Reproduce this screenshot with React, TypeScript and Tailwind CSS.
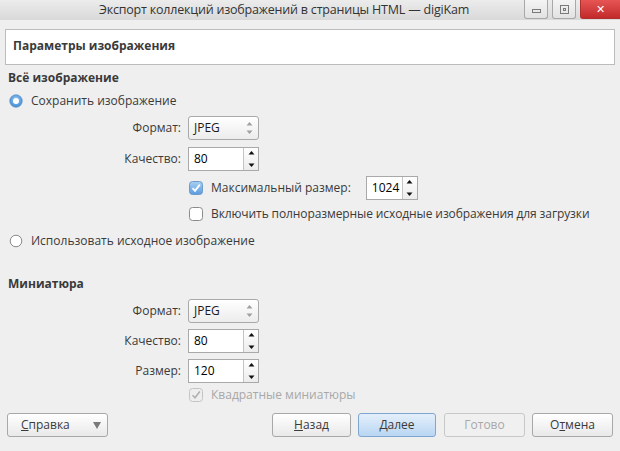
import React from 'react';

const font = { fontFamily: '"Open Sans", "Noto Sans", "DejaVu Sans", sans-serif' };

function Radio({ checked }: { checked?: boolean }) {
  return (
    <svg width="14" height="14" viewBox="0 0 14 14" className="shrink-0">
      <defs>
        <radialGradient id="rg" cx="50%" cy="40%" r="60%">
          <stop offset="0%" stopColor="#9fcdf4" />
          <stop offset="100%" stopColor="#3d8ad6" />
        </radialGradient>
      </defs>
      {checked ? (
        <>
          <circle cx="7" cy="7" r="6.2" fill="url(#rg)" stroke="#5b8fc4" strokeWidth="0.8" />
          <circle cx="7" cy="7" r="3" fill="#ffffff" />
        </>
      ) : (
        <circle cx="7" cy="7" r="5.8" fill="#ffffff" stroke="#8a8a8a" strokeWidth="1" />
      )}
    </svg>
  );
}

function Check({ checked, disabled }: { checked?: boolean; disabled?: boolean }) {
  if (disabled) {
    return (
      <svg width="14" height="14" viewBox="0 0 14 14" className="shrink-0">
        <rect x="0.5" y="0.5" width="13" height="13" rx="3" fill="#eeeeee" stroke="#c4c4c4" />
        <path d="M3.5 7.2 L6 9.8 L10.8 3.6" fill="none" stroke="#b0b0b0" strokeWidth="1.6" />
      </svg>
    );
  }
  return (
    <svg width="14" height="14" viewBox="0 0 14 14" className="shrink-0">
      <defs>
        <linearGradient id="cg" x1="0" y1="0" x2="0" y2="1">
          <stop offset="0%" stopColor="#a8d0f2" />
          <stop offset="100%" stopColor="#5b9be0" />
        </linearGradient>
      </defs>
      {checked ? (
        <>
          <rect x="0.5" y="0.5" width="13" height="13" rx="3" fill="url(#cg)" stroke="#6f9bc8" />
          <path d="M3.5 7.2 L6 9.8 L10.8 3.6" fill="none" stroke="#ffffff" strokeWidth="1.8" />
        </>
      ) : (
        <rect x="0.5" y="0.5" width="13" height="13" rx="3" fill="#ffffff" stroke="#8a8a8a" />
      )}
    </svg>
  );
}

// up/down arrow pair used by combo boxes and spin boxes
function Arrows({ color, gap }: { color: string; gap: number }) {
  const h = 8 + gap;
  return (
    <svg width="7" height={h} viewBox={`0 0 7 ${h}`}>
      <path d="M0.5 3.5 L3.5 0 L6.5 3.5 Z" fill={color} />
      <path d={`M0.5 ${h - 3.5} L3.5 ${h} L6.5 ${h - 3.5} Z`} fill={color} />
    </svg>
  );
}

function Combo({ value }: { value: string }) {
  return (
    <div className="flex h-[24px] w-[71px] items-center justify-between rounded-[3px] border border-[#a9a9a9] bg-gradient-to-b from-[#ffffff] to-[#ececec] pl-[5px] pr-[5px] text-[12px] text-[#1a1a1a]">
      <span>{value}</span>
      <Arrows color="#a0a0a0" gap={4} />
    </div>
  );
}

function Spin({ value, width = 71 }: { value: string; width?: number }) {
  return (
    <div
      className="flex h-[24px] items-stretch border border-[#a9a9a9] bg-white text-[12px] text-black"
      style={{ width }}
    >
      <span className="flex flex-1 items-center pl-[5px]">{value}</span>
      <span className="flex w-[15px] items-center justify-center border-l border-[#c4c4c4] bg-gradient-to-b from-[#ffffff] to-[#ececec]">
        <Arrows color="#111111" gap={8} />
      </span>
    </div>
  );
}

function Row({ label, children }: { label: string; children: React.ReactNode }) {
  return (
    <div className="flex items-center">
      <div className="w-[182px] pr-[1px] text-right">{label}</div>
      <div className="pl-[6px]">{children}</div>
    </div>
  );
}

function Button({
  children,
  className,
}: {
  children: React.ReactNode;
  className: string;
}) {
  return (
    <div className={'flex h-[24px] items-center rounded-[3px] border text-[12px] ' + className}>
      {children}
    </div>
  );
}

export default function App() {
  return (
    <div className="h-[451px] w-[620px] overflow-hidden bg-[#efefef] text-[12px] text-[#3a3a3a]" style={font}>
      {/* Title bar */}
      <div className="flex h-[20px] items-center bg-gradient-to-b from-[#ececec] to-[#d9d9d9]">
        <div className="flex-1 pl-[44px] text-center text-[12.5px] tracking-[-0.2px] text-[#333]">
          Экспорт коллекций изображений в страницы HTML — digiKam
        </div>
        <div className="flex h-[20px] items-start gap-[4px]">
          <div className="flex h-[19px] w-[24px] items-center justify-center rounded-b-[3px] border border-t-0 border-[#a8a8a8] bg-gradient-to-b from-[#f4f4f4] to-[#e2e2e2]">
            <div className="mt-[3px] h-[4px] w-[9px] border border-[#7a7a7a]" />
          </div>
          <div className="flex h-[19px] w-[24px] items-center justify-center rounded-b-[3px] border border-t-0 border-[#a8a8a8] bg-gradient-to-b from-[#f4f4f4] to-[#e2e2e2]">
            <div className="flex h-[9px] w-[9px] items-center justify-center border border-[#7a7a7a]">
              <div className="h-[3px] w-[3px] border border-[#7a7a7a]" />
            </div>
          </div>
          <div className="flex h-[19px] w-[40px] items-center justify-center rounded-bl-[3px] border border-t-0 border-r-0 border-[#b03030] bg-gradient-to-b from-[#e65454] to-[#c22a2a] text-[11px] font-bold text-white">
            ✕
          </div>
        </div>
      </div>

      {/* Header panel */}
      <div className="mx-[5px] mt-[9px] flex h-[36px] items-center border border-[#bcbcbc] bg-white pb-[3px] pl-[7px] font-bold text-[#3a3a3a]">
        Параметры изображения
      </div>

      <div className="mt-[4px] pl-[8px] font-bold">Всё изображение</div>

      <div className="mt-[5px] flex items-center gap-[8px] pl-[9px]">
        <Radio checked />
        <span>Сохранить изображение</span>
      </div>

      <div className="mt-[6px] flex flex-col gap-[7px]">
        <Row label="Формат:">
          <Combo value="JPEG" />
        </Row>
        <Row label="Качество:">
          <Spin value="80" />
        </Row>
      </div>

      <div className="mt-[5px] flex items-center pl-[189px]">
        <Check checked />
        <span className="ml-[8px]">Максимальный размер:</span>
        <div className="ml-[15px]">
          <Spin value="1024" width={52} />
        </div>
      </div>

      <div className="mt-[5px] flex items-center pl-[189px]">
        <Check />
        <span className="ml-[8px] tracking-[-0.1px]">Включить полноразмерные исходные изображения для загрузки</span>
      </div>

      <div className="mt-[9px] flex items-center gap-[8px] pl-[9px]">
        <Radio />
        <span>Использовать исходное изображение</span>
      </div>

      <div className="mt-[25px] pl-[8px] font-bold">Миниатюра</div>

      <div className="mt-[6px] flex flex-col gap-[6px]">
        <Row label="Формат:">
          <Combo value="JPEG" />
        </Row>
        <Row label="Качество:">
          <Spin value="80" />
        </Row>
        <Row label="Размер:">
          <Spin value="120" />
        </Row>
      </div>

      <div className="mt-[3px] flex items-center pl-[189px] text-[#a8a8a8]">
        <Check checked disabled />
        <span className="ml-[8px]">Квадратные миниатюры</span>
      </div>

      {/* Bottom buttons */}
      <div className="mt-[9px] flex items-center px-[7px]">
        <Button className="w-[101px] justify-between border-[#a8a8a8] bg-gradient-to-b from-[#ffffff] to-[#e9e9e9] pl-[13px] pr-[6px] text-[#3a3a3a]">
          <span>
            <span className="underline">С</span>правка
          </span>
          <svg width="8" height="7" viewBox="0 0 8 7">
            <path d="M0 0 L8 0 L4 7 Z" fill="#7a7a7a" />
          </svg>
        </Button>
        <div className="flex-1" />
        <div className="flex gap-[7px]">
          <Button className="w-[79px] justify-center border-[#a8a8a8] bg-gradient-to-b from-[#ffffff] to-[#e9e9e9] text-[#3a3a3a]">
            <span>
              <span className="underline">Н</span>азад
            </span>
          </Button>
          <Button className="w-[78px] justify-center border-[#7fa6cf] bg-gradient-to-b from-[#e4effa] to-[#b9d6f3] text-[#3a3a3a]">
            Далее
          </Button>
          <Button className="ml-[1px] w-[81px] justify-center border-[#c8c8c8] bg-[#f0f0f0] text-[#a8a8a8]">
            Готово
          </Button>
          <Button className="w-[81px] justify-center border-[#a8a8a8] bg-gradient-to-b from-[#ffffff] to-[#e9e9e9] text-[#3a3a3a]">
            <span>
              О<span className="underline">т</span>мена
            </span>
          </Button>
        </div>
      </div>
    </div>
  );
}
